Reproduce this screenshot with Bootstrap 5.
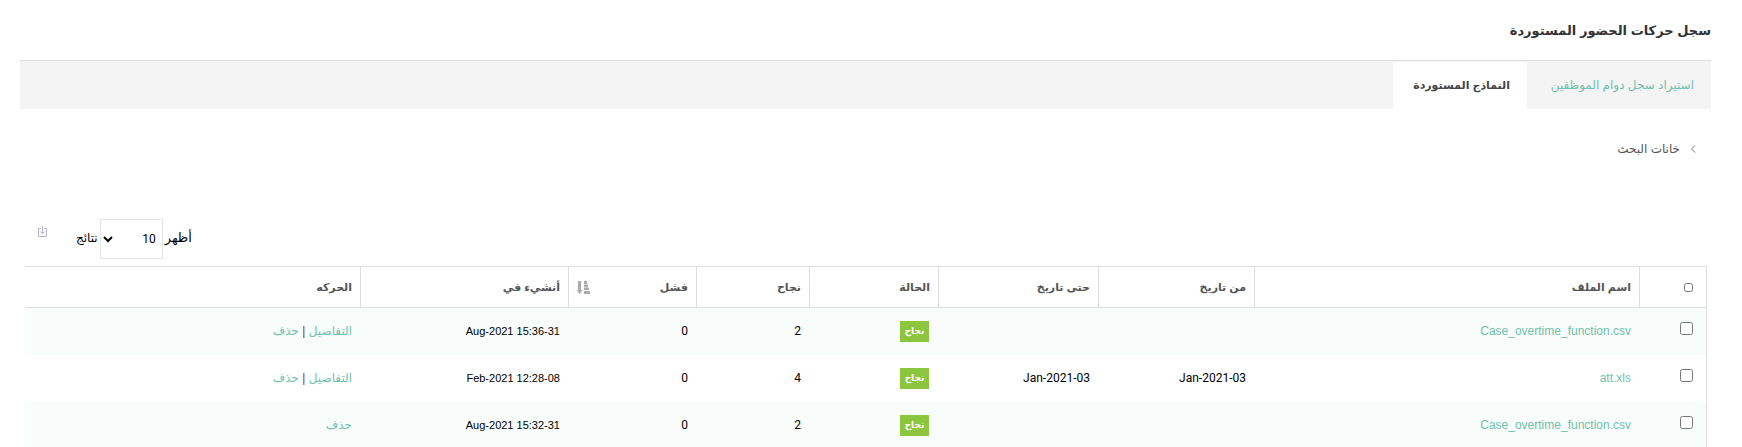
<!DOCTYPE html>
<html lang="ar" dir="rtl">
<head>
<meta charset="utf-8">
<meta name="viewport" content="width=device-width, initial-scale=1">
<title>سجل حركات الحضور المستوردة</title>
<link href="https://cdn.jsdelivr.net/npm/bootstrap@5.3.0/dist/css/bootstrap.min.css" rel="stylesheet">
<style>
  body { font-family: "Liberation Sans", "DejaVu Sans", sans-serif; font-size: 12px; line-height: 20px; color: #000; background: #fff; }
  a { color: #6fc1ad; text-decoration: none; }
  .page-area { padding: 0 31px 0 20px; }
  .page-title { font-size: 13px; line-height: 20px; font-weight: 700; color: #333; padding: 21px 0 19px; }
  .tab-strip { background: #f4f4f4; border-top: 1px solid #ddd; padding-top: 1px; }
  .tab-strip .nav-link { height: 47px; padding: 13px 17px; color: #6fc1ad; border-radius: 0; white-space: nowrap; }
  .tab-strip .first-tab { width: 184px; }
  .tab-strip .second-tab { width: 134px; }
  .tab-strip .nav-link.active { background: #fff; color: #444; font-size: 11px; font-weight: 700; }
  .search-toggle { color: #555; font-size: 12px; gap: 10px; padding: 30px 15px 0; margin-bottom: 60px; }
  .tools { margin: 0 5px 7px; min-height: 40px; padding-left: 13px; }
  .len-box { gap: 2px; }
  .len-box label { padding-bottom: 2px; }
  .len-box label:first-child { font-size: 13px; }
  .len-select { width: 63px; height: 40px; border: 1px solid #e5e5e5; background: #fff; color: #000; padding: 0 2px; font-family: Roboto, sans-serif; font-size: 12px; }
  .num-text { font-family: Roboto, sans-serif; font-size: 12px; }
  .made-text { font-family: "Liberation Sans", sans-serif; font-size: 11px; }
  .export-link { margin-right: 29px; padding-top: 7px; }
  .log-area { padding: 0 4px 0 5px; }
  .log-table { table-layout: fixed; width: 100%; margin: 0; border-right: 1px solid #ddd; border-collapse: separate; border-spacing: 0; }
  .log-table th { height: 42px; padding: 0 8px; color: #555; font-size: 11px; border-top: 1px solid #ddd; border-bottom: 1px solid #ddd; border-left: 1px solid #ddd; vertical-align: middle; font-weight: 700; }
  .log-table th:last-child { border-left: 0; }
  .log-table td { height: 47px; padding: 0 8px 2px; vertical-align: middle; white-space: nowrap; }
  .log-table tbody tr:nth-child(odd) td { background: #f8fcfb; }
  .log-table .pick { padding-right: 13px; }
  .c-pick { width: 67px; } .c-from { width: 156px; } .c-to { width: 160px; } .c-state { width: 129px; }
  .c-ok { width: 113px; } .c-fail { width: 128px; } .c-made { width: 208px; } .c-act { width: 335px; }
  .pick input { display: block; width: 13px; height: 13px; margin: 0 0 4px; }
  th.pick input { width: 9px; height: 9px; margin: 0; }
  .log-table .state-cell { padding: 0 9px; }
  .state-tag { display: inline-block; background: #8cc63f; color: #fff; font-size: 9px; font-weight: 700; line-height: 21px; width: 29px; text-align: center; vertical-align: middle; }
  .bar-sep { color: #7d2a50; }
</style>
</head>
<body>
<main class="page-area">
  <h1 class="page-title m-0">سجل حركات الحضور المستوردة</h1>
  <nav class="tab-strip nav">
    <a class="nav-link first-tab" href="#import">استيراد سجل دوام الموظفين</a>
    <a class="nav-link second-tab active" href="#forms" aria-current="page">النماذج المستوردة</a>
  </nav>
  <button type="button" class="search-toggle d-flex align-items-center border-0 bg-transparent">
    <svg width="6" height="8" viewBox="0 0 6 8" fill="none" stroke="#777b94" aria-hidden="true"><path d="M5 .5 1.500 4 5 7.500"/></svg>
    <span>خانات البحث</span>
  </button>
  <div class="tools d-flex justify-content-end align-items-start">
    <div class="len-box d-flex align-items-center">
      <label for="len">أظهر</label>
      <select id="len" class="len-select"><option>10</option><option>25</option><option>50</option></select>
      <label for="len">نتائج</label>
    </div>
    <a class="export-link d-flex" href="#export" aria-label="تصدير">
      <svg width="9" height="11" viewBox="0 0 9 11" fill="none" stroke="#b6b3d2" aria-hidden="true"><path d="M3 2.500H.5v8h8v-8H6M4.500 0v8M2.500 5.500l2 2 2-2"/></svg>
    </a>
  </div>
  <div class="log-area">
    <table class="log-table">
      <colgroup><col class="c-pick"><col><col class="c-from"><col class="c-to"><col class="c-state"><col class="c-ok"><col class="c-fail"><col class="c-made"><col class="c-act"></colgroup>
      <thead>
        <tr>
          <th class="pick"><input type="checkbox" aria-label="تحديد الكل"></th>
          <th>اسم الملف</th><th>من تاريخ</th><th>حتى تاريخ</th><th>الحالة</th><th>نجاح</th>
          <th><div class="d-flex justify-content-between align-items-center"><span>فشل</span>
            <svg width="13" height="13" viewBox="0 0 13 13" fill="#aaa" aria-hidden="true"><path d="M1 0h3v9h1.500L2.500 13 0 9h1zM7 0h3v3H7zM7 3.500h4v2.500H7zM7 6.500h5v2.500H7zM7 10h6v3H7z"/></svg></div></th>
          <th>أنشيء في</th><th>الحركه</th>
        </tr>
      </thead>
      <tbody>
        <tr>
          <td class="pick"><input type="checkbox" aria-label="تحديد الصف"></td>
          <td><a href="#f1">Case_overtime_function.csv</a></td><td></td><td></td>
          <td class="state-cell"><span class="state-tag">نجاح</span></td><td class="num-text">2</td><td class="num-text">0</td><td class="made-text">31-Aug-2021 15:36</td>
          <td><a href="#d1">التفاصيل</a> <span class="bar-sep">|</span> <a href="#x1">حذف</a></td>
        </tr>
        <tr>
          <td class="pick"><input type="checkbox" aria-label="تحديد الصف"></td>
          <td><a href="#f2">att.xls</a></td><td class="num-text">03-Jan-2021</td><td class="num-text">03-Jan-2021</td>
          <td class="state-cell"><span class="state-tag">نجاح</span></td><td class="num-text">4</td><td class="num-text">0</td><td class="made-text">08-Feb-2021 12:28</td>
          <td><a href="#d2">التفاصيل</a> <span class="bar-sep">|</span> <a href="#x2">حذف</a></td>
        </tr>
        <tr>
          <td class="pick"><input type="checkbox" aria-label="تحديد الصف"></td>
          <td><a href="#f3">Case_overtime_function.csv</a></td><td></td><td></td>
          <td class="state-cell"><span class="state-tag">نجاح</span></td><td class="num-text">2</td><td class="num-text">0</td><td class="made-text">31-Aug-2021 15:32</td>
          <td><a href="#x3">حذف</a></td>
        </tr>
      </tbody>
    </table>
  </div>
</main>
<script src="https://cdn.jsdelivr.net/npm/bootstrap@5.3.0/dist/js/bootstrap.bundle.min.js"></script>
</body>
</html>
